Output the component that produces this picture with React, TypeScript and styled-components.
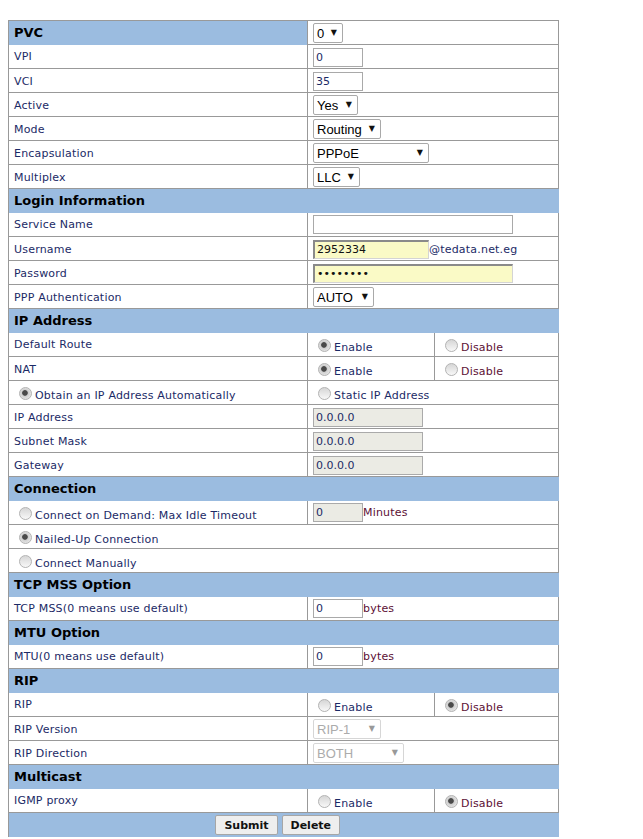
import styled, { createGlobalStyle, css } from "styled-components";

const Global = createGlobalStyle`
	body {
		margin: 8px;
		background: #fff;
		font-family: "DejaVu Sans", Verdana, sans-serif;
	}
`;

const Table = styled.table`
	margin-top: 12px;
	width: 550px;
	border-collapse: collapse;
	border-top: 1px solid #999;
	table-layout: fixed;
	font-size: 11px;
	color: #1b2a66;
`;

const Row = styled.tr`
	height: 24px;
`;

const Cell = styled.td`
	box-sizing: border-box;
	height: 24px;
	padding: 1px 5px 0;
	border: 1px solid #999;
	border-top: none;
	vertical-align: middle;
	white-space: nowrap;
	line-height: 13px;
	letter-spacing: 0.2px;
`;

const HeadCell = styled.td`
	box-sizing: border-box;
	height: 24px;
	padding: 1px 5px 0;
	background: #9bbce0;
	border: none;
	border-left: 1px solid #999;
	font-size: 13px;
	font-weight: bold;
	color: #000;
	vertical-align: middle;
	line-height: 16px;
`;

const RadioCell = styled(Cell)`
	padding: 4px 5px 0 0;
`;

const inputBase = css`
	box-sizing: border-box;
	height: 19px;
	padding: 0 2px;
	font-family: "DejaVu Sans", Verdana, sans-serif;
	font-size: 11px;
	color: #1b2a66;
	vertical-align: middle;
	outline: none;
`;

const TextInput = styled.input<{ $w: number; $fill?: boolean }>`
	${inputBase};
	width: ${p => p.$w}px;
	border: 1px solid #a9a9a9;
	background: #fff;
	${p =>
		p.$fill &&
		css`
			background: #fafac6;
			border: 1px solid #d4d4d4;
			border-top: 2px solid #8a8a8a;
			border-left: 2px solid #8a8a8a;
			color: #111;
		`}
	&:disabled {
		background: #ebebe4;
		border-color: #aaa;
		color: #1b2a66;
	}
`;

const SelectWrap = styled.span<{ $w: number; $off?: boolean }>`
	position: relative;
	display: inline-block;
	width: ${p => p.$w}px;
	height: 20px;
	vertical-align: middle;
	letter-spacing: 0;
	select {
		box-sizing: border-box;
		appearance: none;
		width: 100%;
		height: 20px;
		padding: 0 14px 0 3px;
		border: 1px solid ${p => (p.$off ? "#c6c6c6" : "#a9a9a9")};
		border-radius: 2px;
		background: #fff;
		font-family: "Liberation Sans", Arial, sans-serif;
		font-size: 13px;
		color: ${p => (p.$off ? "#888" : "#000")};
		outline: none;
	}
	&::after {
		content: "▼";
		position: absolute;
		right: 6px;
		top: 5px;
		font-size: 8px;
		line-height: 10px;
		color: ${p => (p.$off ? "#999" : "#111")};
		pointer-events: none;
	}
`;

const Radio = styled.input.attrs({ type: "radio" })`
	appearance: none;
	box-sizing: border-box;
	width: 13px;
	height: 13px;
	margin: 0 3px 0 10px;
	border: 1px solid #b4b4b4;
	border-radius: 50%;
	background: linear-gradient(#d6d6d6, #f8f8f8);
	vertical-align: -2px;
	&:checked {
		background: radial-gradient(circle at 45% 45%, #4a4a4a 0 2.4px, #cfcfcf 3.2px, #f4f4f4 100%);
	}
`;

const Unit = styled.span<{ $tone?: "warm" }>`
	color: ${p => (p.$tone === "warm" ? "#5c1035" : "#1b2a66")};
	vertical-align: middle;
`;

const ButtonCell = styled.td`
	box-sizing: border-box;
	height: 24px;
	padding: 1px 12px 0 0;
	background: #9bbce0;
	border-left: 1px solid #999;
	text-align: center;
	vertical-align: middle;
`;

const Btn = styled.button`
	box-sizing: border-box;
	height: 20px;
	margin: 0 2px;
	padding: 0 8px;
	border: 1px solid #a6a6a6;
	border-radius: 2px;
	background: #eee;
	font-family: "DejaVu Sans", Verdana, sans-serif;
	font-size: 11px;
	font-weight: bold;
	color: #111;
	vertical-align: middle;
`;

function Select({ w, value, off }: { w: number; value: string; off?: boolean }) {
	return (
		<SelectWrap $w={w} $off={off}>
			<select defaultValue={value} disabled={off}>
				<option>{value}</option>
			</select>
		</SelectWrap>
	);
}

function Header({ title }: { title: string }) {
	return (
		<Row>
			<HeadCell colSpan={3}>{title}</HeadCell>
		</Row>
	);
}

function Field({ label, children }: { label: string; children: React.ReactNode }) {
	return (
		<Row>
			<Cell>{label}</Cell>
			<Cell colSpan={2}>{children}</Cell>
		</Row>
	);
}

function Toggle({ label, name, on }: { label: string; name: string; on: boolean }) {
	return (
		<Row>
			<Cell>{label}</Cell>
			<RadioCell>
				<Radio name={name} defaultChecked={on} />
				<Unit>Enable</Unit>
			</RadioCell>
			<RadioCell>
				<Radio name={name} defaultChecked={!on} />
				<Unit $tone="warm">Disable</Unit>
			</RadioCell>
		</Row>
	);
}

export default function App() {
	return (
		<>
			<Global />
			<form>
				<Table>
					<colgroup>
						<col style={{ width: 299 }} />
						<col style={{ width: 127 }} />
						<col style={{ width: 124 }} />
					</colgroup>
					<tbody>
						<Row>
							<HeadCell>PVC</HeadCell>
							<Cell colSpan={2}>
								<Select w={30} value="0" />
							</Cell>
						</Row>
						<Field label="VPI">
							<TextInput $w={50} defaultValue="0" />
						</Field>
						<Field label="VCI">
							<TextInput $w={50} defaultValue="35" />
						</Field>
						<Field label="Active">
							<Select w={45} value="Yes" />
						</Field>
						<Field label="Mode">
							<Select w={68} value="Routing" />
						</Field>
						<Field label="Encapsulation">
							<Select w={116} value="PPPoE" />
						</Field>
						<Field label="Multiplex">
							<Select w={47} value="LLC" />
						</Field>

						<Header title="Login Information" />
						<Field label="Service Name">
							<TextInput $w={200} defaultValue="" />
						</Field>
						<Field label="Username">
							<TextInput $w={116} $fill defaultValue="2952334" />
							<Unit>@tedata.net.eg</Unit>
						</Field>
						<Field label="Password">
							<TextInput $w={200} $fill type="password" defaultValue="12345678" />
						</Field>
						<Field label="PPP Authentication">
							<Select w={61} value="AUTO" />
						</Field>

						<Header title="IP Address" />
						<Toggle label="Default Route" name="route" on />
						<Toggle label="NAT" name="nat" on />
						<Row>
							<RadioCell>
								<Radio name="ipmode" defaultChecked />
								<Unit>Obtain an IP Address Automatically</Unit>
							</RadioCell>
							<RadioCell colSpan={2}>
								<Radio name="ipmode" />
								<Unit>Static IP Address</Unit>
							</RadioCell>
						</Row>
						<Field label="IP Address">
							<TextInput $w={110} disabled defaultValue="0.0.0.0" />
						</Field>
						<Field label="Subnet Mask">
							<TextInput $w={110} disabled defaultValue="0.0.0.0" />
						</Field>
						<Field label="Gateway">
							<TextInput $w={110} disabled defaultValue="0.0.0.0" />
						</Field>

						<Header title="Connection" />
						<Row>
							<RadioCell>
								<Radio name="conn" />
								<Unit>Connect on Demand: Max Idle Timeout</Unit>
							</RadioCell>
							<Cell colSpan={2}>
								<TextInput $w={50} disabled defaultValue="0" />
								<Unit $tone="warm">Minutes</Unit>
							</Cell>
						</Row>
						<Row>
							<RadioCell colSpan={3}>
								<Radio name="conn" defaultChecked />
								<Unit>Nailed-Up Connection</Unit>
							</RadioCell>
						</Row>
						<Row>
							<RadioCell colSpan={3}>
								<Radio name="conn" />
								<Unit>Connect Manually</Unit>
							</RadioCell>
						</Row>

						<Header title="TCP MSS Option" />
						<Field label="TCP MSS(0 means use default)">
							<TextInput $w={50} defaultValue="0" />
							<Unit $tone="warm">bytes</Unit>
						</Field>

						<Header title="MTU Option" />
						<Field label="MTU(0 means use default)">
							<TextInput $w={50} defaultValue="0" />
							<Unit $tone="warm">bytes</Unit>
						</Field>

						<Header title="RIP" />
						<Toggle label="RIP" name="rip" on={false} />
						<Field label="RIP Version">
							<Select w={68} value="RIP-1" off />
						</Field>
						<Field label="RIP Direction">
							<Select w={91} value="BOTH" off />
						</Field>

						<Header title="Multicast" />
						<Toggle label="IGMP proxy" name="igmp" on={false} />

						<Row>
							<ButtonCell colSpan={3}>
								<Btn type="button">Submit</Btn>
								<Btn type="button">Delete</Btn>
							</ButtonCell>
						</Row>
					</tbody>
				</Table>
			</form>
		</>
	);
}
